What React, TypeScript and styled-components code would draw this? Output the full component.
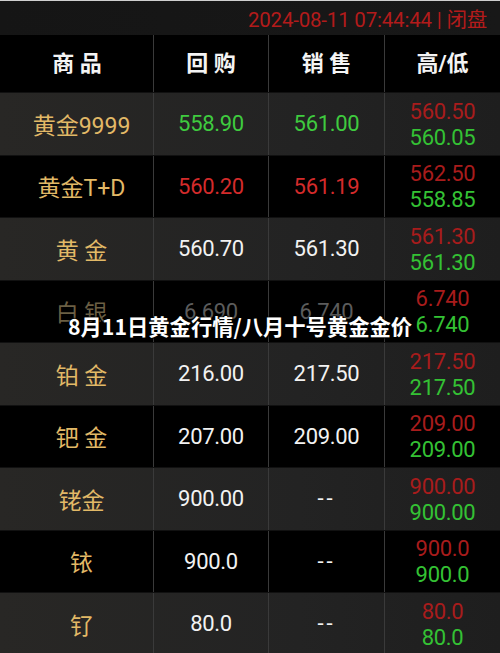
import React from 'react';
import styled, { createGlobalStyle } from 'styled-components';

const GlobalStyle = createGlobalStyle`
  html, body {
    margin: 0;
    padding: 0;
    background: #000;
  }
  body {
    font-family: Roboto, "Noto Sans CJK SC", sans-serif;
  }
`;

type Tone = 'white' | 'red' | 'green' | 'dim';

interface Quote {
  name: string;
  buy: string;
  buyTone: Tone;
  sell: string;
  sellTone: Tone;
  high: string;
  low: string;
  nameDim?: boolean;
}

const quotes: Quote[] = [
  { name: '黄金9999', buy: '558.90', buyTone: 'green', sell: '561.00', sellTone: 'green', high: '560.50', low: '560.05' },
  { name: '黄金T+D', buy: '560.20', buyTone: 'red', sell: '561.19', sellTone: 'red', high: '562.50', low: '558.85' },
  { name: '黄 金', buy: '560.70', buyTone: 'white', sell: '561.30', sellTone: 'white', high: '561.30', low: '561.30' },
  { name: '白 银', buy: '6.690', buyTone: 'dim', sell: '6.740', sellTone: 'dim', high: '6.740', low: '6.740', nameDim: true },
  { name: '铂 金', buy: '216.00', buyTone: 'white', sell: '217.50', sellTone: 'white', high: '217.50', low: '217.50' },
  { name: '钯 金', buy: '207.00', buyTone: 'white', sell: '209.00', sellTone: 'white', high: '209.00', low: '209.00' },
  { name: '铑金', buy: '900.00', buyTone: 'white', sell: '--', sellTone: 'white', high: '900.00', low: '900.00' },
  { name: '铱', buy: '900.0', buyTone: 'white', sell: '--', sellTone: 'white', high: '900.0', low: '900.0' },
  { name: '钌', buy: '80.0', buyTone: 'white', sell: '--', sellTone: 'white', high: '80.0', low: '80.0' },
];

const toneColor: Record<Tone, string> = {
  white: '#f2f2f2',
  red: '#d42b2b',
  green: '#3fcb3f',
  dim: '#5c5c5c',
};

const App: React.FC = () => {
  return (
    <>
      <GlobalStyle />
      <Screen>
        <StatusBar>
          <StatusText>2024-08-11 07:44:44 | 闭盘</StatusText>
        </StatusBar>
        <Table>
          <HeadRow>
            <HeadCell>商 品</HeadCell>
            <HeadCell>回 购</HeadCell>
            <HeadCell>销 售</HeadCell>
            <HeadCell>高/低</HeadCell>
          </HeadRow>
          {quotes.map((q, i) => (
            <Row key={q.name} striped={i % 2 === 0}>
              <NameCell dim={q.nameDim}>{q.name}</NameCell>
              <PriceCell tone={q.buyTone} empty={q.buy === '--'}>{q.buy}</PriceCell>
              <PriceCell tone={q.sellTone} empty={q.sell === '--'}>{q.sell}</PriceCell>
              <RangeCell>
                <RangeValue high>{q.high}</RangeValue>
                <RangeValue>{q.low}</RangeValue>
              </RangeCell>
            </Row>
          ))}
        </Table>
        <Caption>8月11日黄金行情/八月十号黄金金价</Caption>
      </Screen>
    </>
  );
};

const Screen = styled.div`
  position: relative;
  width: 500px;
  height: 653px;
  overflow: hidden;
  background: #000;
  border-top: 1px solid #cfcfcf;
  box-sizing: border-box;
`;

const StatusBar = styled.div`
  height: 34px;
  display: flex;
  align-items: center;
  justify-content: flex-end;
  padding-right: 13px;
  background: linear-gradient(90deg, #151515, #181818);
`;

const StatusText = styled.span`
  color: #b31b1b;
  font-size: 20.5px;
  letter-spacing: -0.2px;
`;

const Table = styled.div`
  display: flex;
  flex-direction: column;
`;

const columns = '153px 115px 116px 116px';

const HeadRow = styled.div`
  display: grid;
  grid-template-columns: ${columns};
  height: 57px;
  background: #000;
`;

const HeadCell = styled.div`
  display: flex;
  align-items: center;
  justify-content: center;
  padding-bottom: 5px;
  color: #f4f4f4;
  font-size: 22px;
  font-weight: 700;
  border-left: 1px solid #3a3a3a;
  &:first-child {
    border-left: none;
    padding-left: 1px;
  }
`;

const Row = styled.div<{ striped: boolean }>`
  display: grid;
  grid-template-columns: ${columns};
  height: 62.5px;
  background: ${({ striped }) =>
    striped ? 'linear-gradient(90deg, #282725 0%, #232323 60%, #1e1e1e 100%)' : '#000'};
  border-top: 1px solid #111;
  box-sizing: border-box;
`;

const BaseCell = styled.div`
  display: flex;
  align-items: center;
  justify-content: center;
  border-left: 1px solid #3a3a3a;
`;

const NameCell = styled(BaseCell)<{ dim?: boolean }>`
  border-left: none;
  padding-left: 10px;
  color: ${({ dim }) => (dim ? '#6b5f44' : '#e2b967')};
  font-size: 23px;
  white-space: pre;
`;

const PriceCell = styled(BaseCell)<{ tone: Tone; empty?: boolean }>`
  color: ${({ tone }) => toneColor[tone]};
  font-size: 22px;
  letter-spacing: ${({ empty }) => (empty ? '3px' : '-0.3px')};
`;

const RangeCell = styled(BaseCell)`
  flex-direction: column;
  line-height: 26px;
  padding-top: 2px;
`;

const RangeValue = styled.span<{ high?: boolean }>`
  color: ${({ high }) => (high ? '#a81c1c' : '#34c234')};
  font-size: 22px;
  letter-spacing: -0.3px;
`;

const Caption = styled.div`
  position: absolute;
  left: 0;
  right: 0;
  top: 309px;
  padding-left: 68px;
  color: #fff;
  font-size: 21.3px;
  font-weight: 700;
  font-family: "Noto Sans CJK SC", sans-serif;
  text-shadow: 0 0 3px #000, 0 0 2px #000, 1px 1px 2px #000;
  white-space: nowrap;
`;

export default App;
